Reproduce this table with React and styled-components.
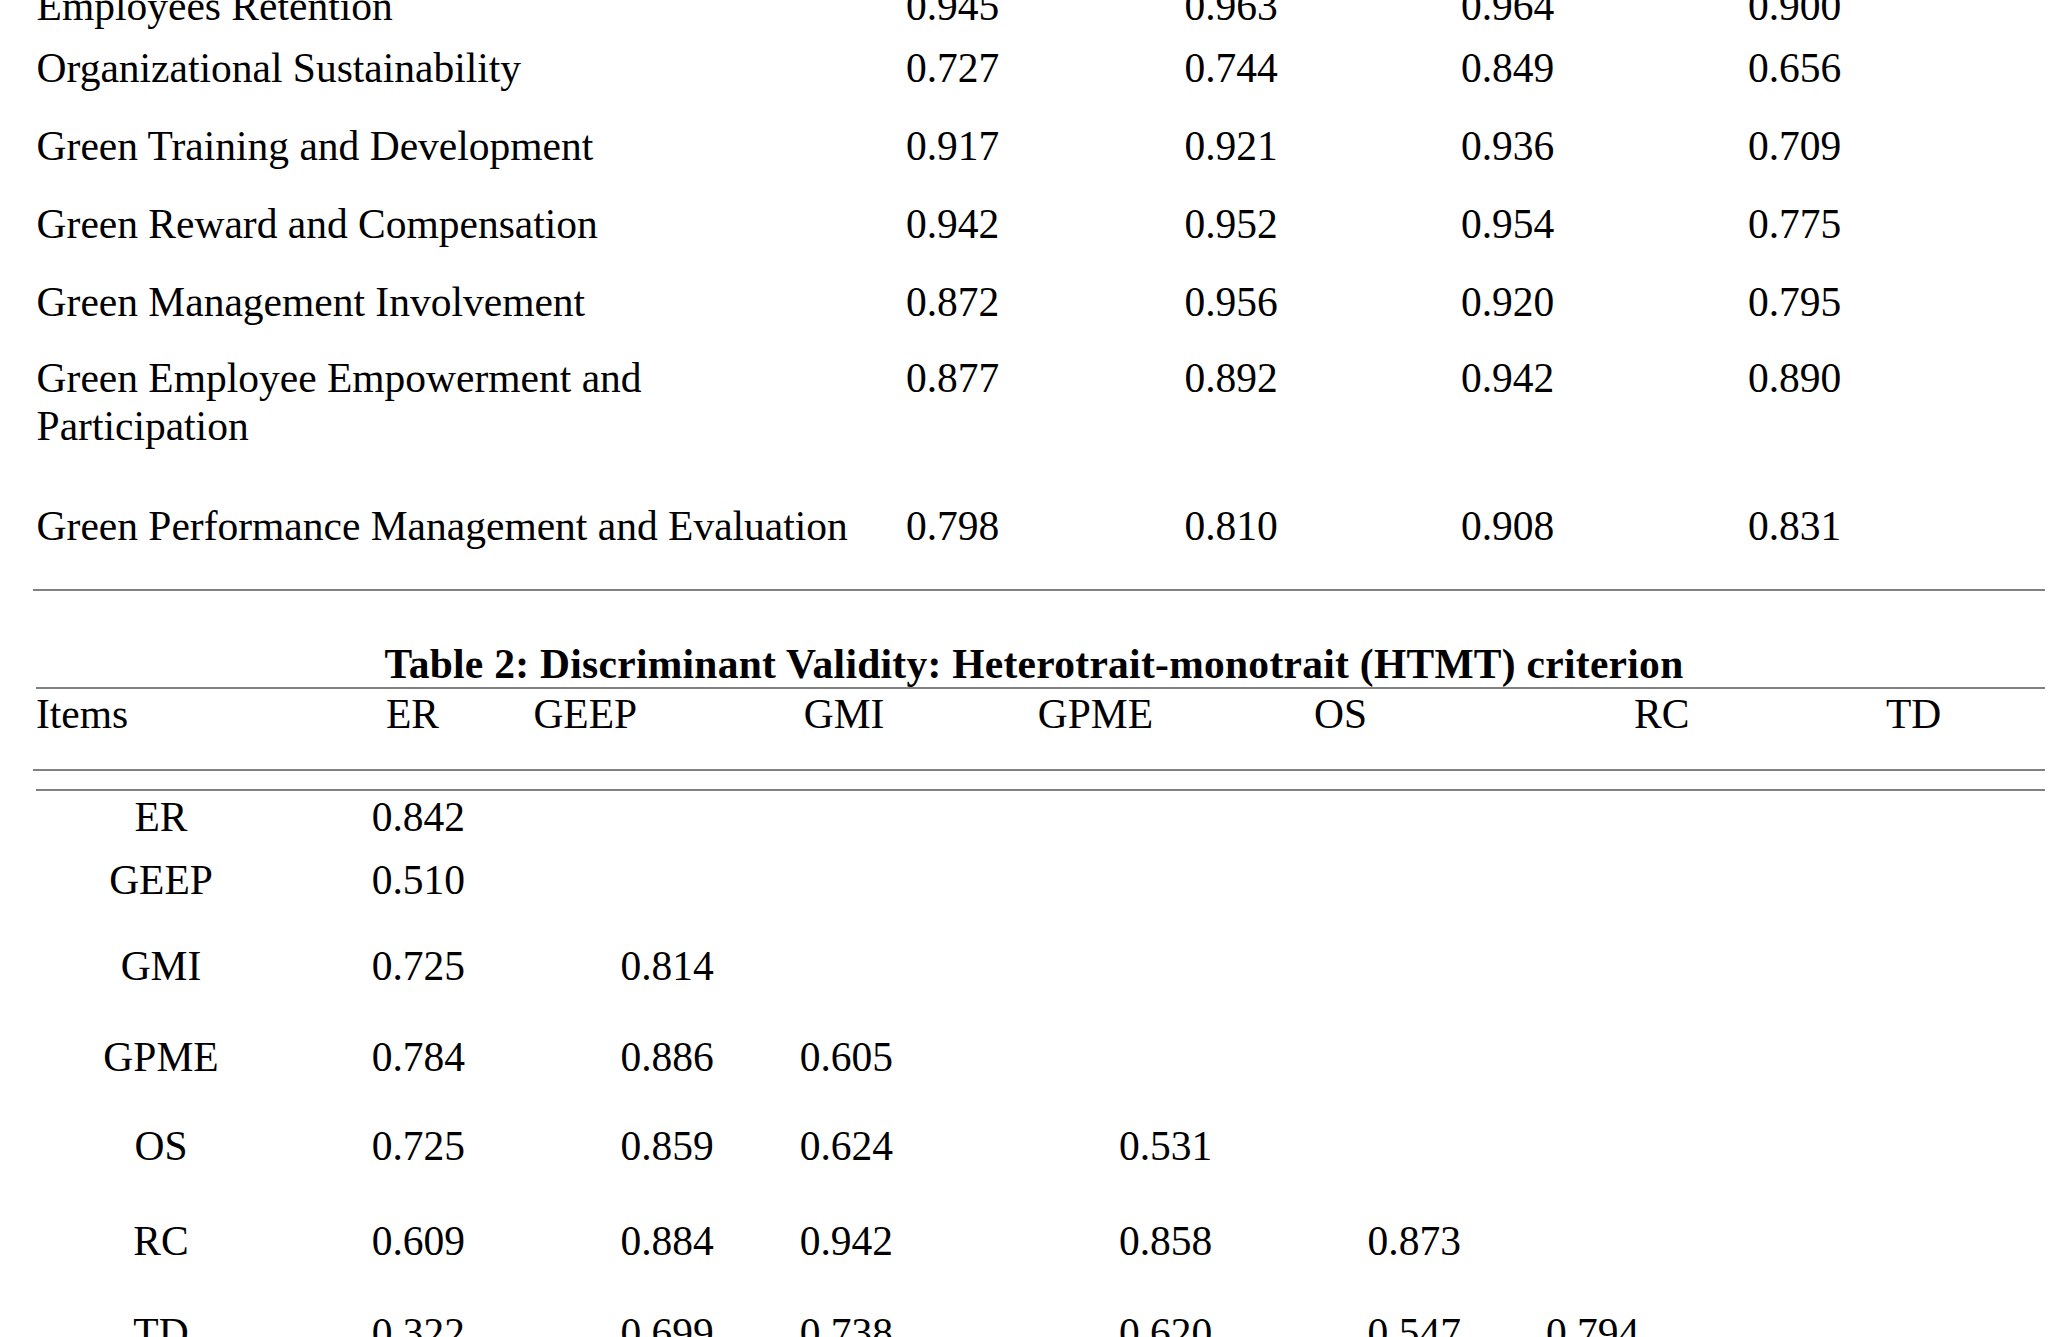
import styled, { createGlobalStyle } from 'styled-components';

const GlobalStyle = createGlobalStyle`
  html, body {
    margin: 0;
    padding: 0;
    background: #fff;
    overflow: hidden;
  }
  body {
    font-family: "Liberation Serif", "Times New Roman", serif;
    color: #000;
  }
`;

const Page = styled.main`
  box-sizing: border-box;
  height: 1337px;
  overflow: hidden;
  padding: 0 7px 0 33px;
  font-size: 41.5px;
  line-height: 48px;
`;

const Sheet = styled.div`
  margin-top: -18px;
`;

const MeasureRow = styled.div`
  display: grid;
  grid-template-columns: 869.4px 278.4px 276.6px 287px 1fr;
  height: ${(p) => p.$h}px;
  padding-left: 3.6px;
`;

const Construct = styled.div`
  white-space: pre-line;
`;

const Cell = styled.div`
  white-space: nowrap;
`;

const Rule = styled.hr`
  border: 0;
  height: 2px;
  background: #818181;
  margin: ${(p) => p.$mt || 0}px 0 0 ${(p) => p.$inset || 0}px;
`;

const Title = styled.h2`
  margin: 49px 0 -1px;
  padding-right: 10px;
  font-size: inherit;
  line-height: 48px;
  font-weight: bold;
  letter-spacing: 0.28px;
  text-align: center;
  white-space: nowrap;
`;

const HeadRow = styled.div`
  display: grid;
  grid-template-columns: 350px 147.4px 270.3px 234.1px 276.2px 320px 252px 1fr;
  height: 78.7px;
  margin-top: 1.3px;
  padding-left: 3px;
`;

const MatrixRow = styled.div`
  display: grid;
  grid-template-columns: 335.7px 248.7px 179.3px 319.3px 248.6px 178.4px 1fr;
  height: ${(p) => p.$h}px;
  padding-left: 3px;
`;

const RowLabel = styled.div`
  padding-right: 85.7px;
  text-align: center;
`;

const Spacer = styled.div`
  height: 1.7px;
`;

const reliability = [
  { name: 'Employees Retention', v: ['0.945', '0.963', '0.964', '0.900'], h: 62 },
  { name: 'Organizational Sustainability', v: ['0.727', '0.744', '0.849', '0.656'], h: 78 },
  { name: 'Green Training and Development', v: ['0.917', '0.921', '0.936', '0.709'], h: 78 },
  { name: 'Green Reward and Compensation', v: ['0.942', '0.952', '0.954', '0.775'], h: 77.5 },
  { name: 'Green Management Involvement', v: ['0.872', '0.956', '0.920', '0.795'], h: 76.5 },
  { name: 'Green Employee Empowerment and\nParticipation', v: ['0.877', '0.892', '0.942', '0.890'], h: 147.5 },
  { name: 'Green Performance Management and Evaluation', v: ['0.798', '0.810', '0.908', '0.831'], h: 48 },
];

const heads = ['Items', 'ER', 'GEEP', 'GMI', 'GPME', 'OS', 'RC', 'TD'];

const htmt = [
  { item: 'ER', v: ['0.842'], h: 63.3 },
  { item: 'GEEP', v: ['0.510'], h: 86 },
  { item: 'GMI', v: ['0.725', '0.814'], h: 90.7 },
  { item: 'GPME', v: ['0.784', '0.886', '0.605'], h: 89.3 },
  { item: 'OS', v: ['0.725', '0.859', '0.624', '0.531'], h: 95 },
  { item: 'RC', v: ['0.609', '0.884', '0.942', '0.858', '0.873'], h: 92.3 },
  { item: 'TD', v: ['0.322', '0.699', '0.738', '0.620', '0.547', '0.794'], h: 48 },
];

export default function App() {
  return (
    <>
      <GlobalStyle />
      <Page>
        <Sheet>
          {reliability.map((r) => (
            <MeasureRow key={r.name} $h={r.h}>
              <Construct>{r.name}</Construct>
              {r.v.map((x, i) => (
                <Cell key={i}>{x}</Cell>
              ))}
            </MeasureRow>
          ))}
          <Rule $mt={39.5} />

          <Title>Table 2: Discriminant Validity: Heterotrait-monotrait (HTMT) criterion</Title>
          <Rule $inset={3} />
          <HeadRow>
            {heads.map((h) => (
              <Cell key={h}>{h}</Cell>
            ))}
          </HeadRow>
          <Rule />
          <Rule $mt={18} $inset={3} />
          <Spacer />
          {htmt.map((r) => (
            <MatrixRow key={r.item} $h={r.h}>
              <RowLabel>{r.item}</RowLabel>
              {r.v.map((x, i) => (
                <Cell key={i}>{x}</Cell>
              ))}
            </MatrixRow>
          ))}
        </Sheet>
      </Page>
    </>
  );
}
